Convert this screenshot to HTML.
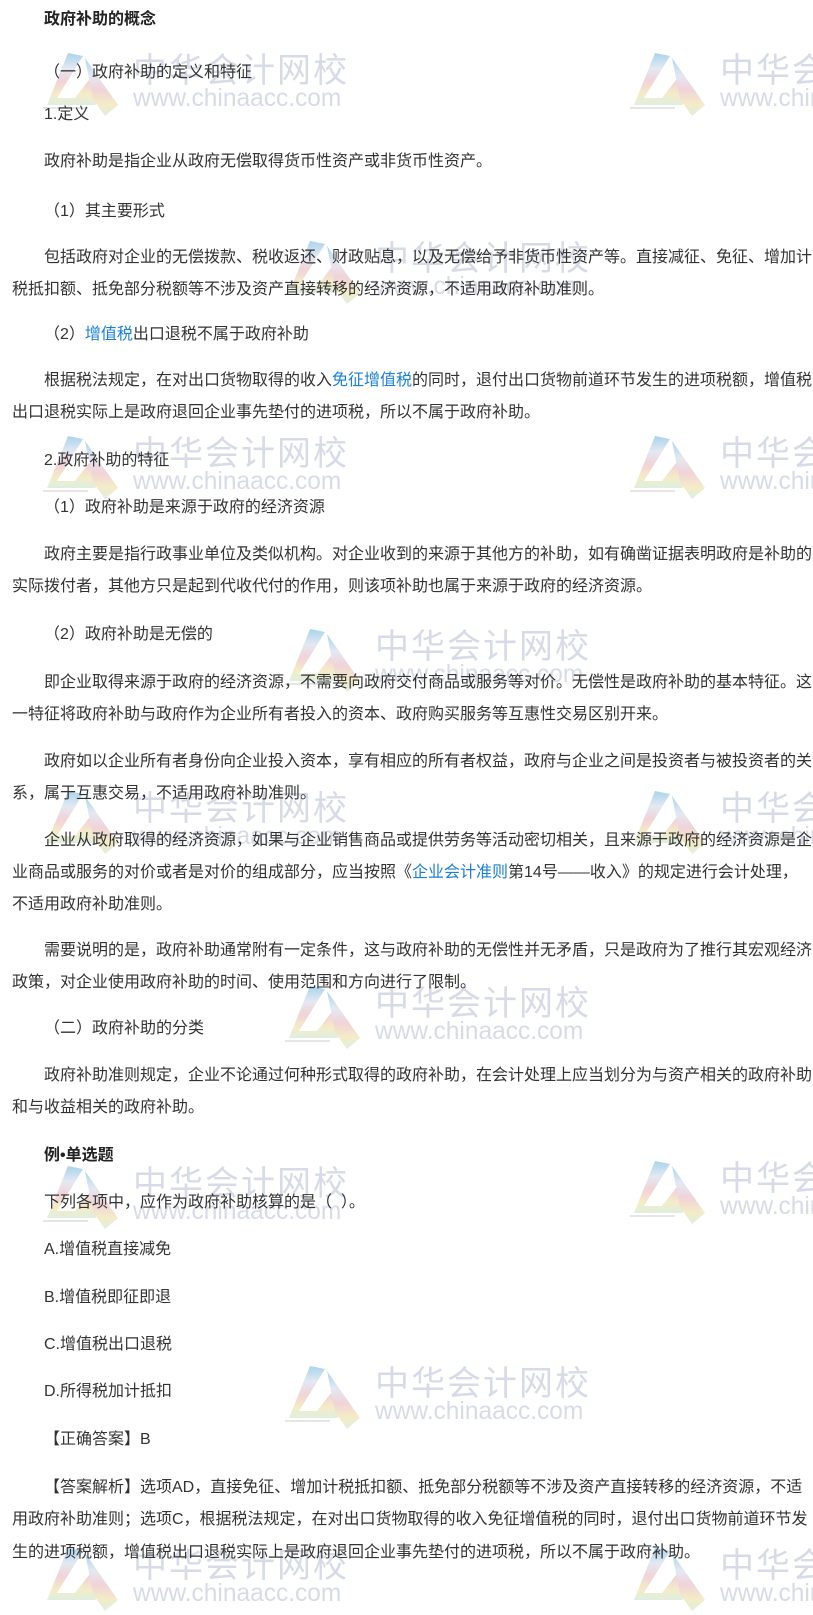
<!DOCTYPE html>
<html><head><meta charset="utf-8">
<style>
html,body{margin:0;padding:0;background:#fff;}
body{width:813px;height:1590px;position:relative;overflow:hidden;font-family:"Liberation Sans","Noto Sans CJK SC",sans-serif;font-size:16px;color:#333;}
.l{position:absolute;left:12px;height:32px;line-height:32px;white-space:nowrap;z-index:2;}
.i{left:44px;}
.b{font-weight:bold;color:#222;}
a{color:#1a7fd6;text-decoration:none;}
.wm{position:absolute;width:300px;height:70px;z-index:1;}
.wm .t{position:absolute;left:90px;top:0;font-size:34px;line-height:36px;color:#d6dbe7;letter-spacing:2px;white-space:nowrap;font-family:"Noto Sans CJK SC",sans-serif;}
.wm .u{position:absolute;left:90px;top:36px;font-size:25px;line-height:24px;color:#d6dbe7;white-space:nowrap;transform:scaleX(0.98);transform-origin:left;font-family:"Liberation Sans",sans-serif;}
.wm svg{position:absolute;left:0;top:0;}
</style></head><body>

<svg width="0" height="0" style="position:absolute"><defs>
<linearGradient id="g" x1="0" y1="0" x2="0" y2="1">
<stop offset="0" stop-color="#a9d4ec"/><stop offset="0.3" stop-color="#e4e8f2"/><stop offset="0.55" stop-color="#f1d3d8"/><stop offset="0.8" stop-color="#f4ecc7"/><stop offset="1" stop-color="#dfeee0"/>
</linearGradient></defs></svg>

<div class="wm" style="left:43px;top:50px"><svg width="90" height="70"><path d="M25 3 L40 6 L14 48 L32 48 L46 30 L60 48 L52 55 L4 55 Z" fill="url(#g)"/><path d="M42 8 L75 55 L62 66 L50 49 Z" fill="url(#g)"/><path d="M0 58 L45 58" stroke="#e6e6e6" stroke-width="2"/></svg><div class="t">中华会计网校</div><div class="u">www.chinaacc.com</div></div>
<div class="wm" style="left:630px;top:50px"><svg width="90" height="70"><path d="M25 3 L40 6 L14 48 L32 48 L46 30 L60 48 L52 55 L4 55 Z" fill="url(#g)"/><path d="M42 8 L75 55 L62 66 L50 49 Z" fill="url(#g)"/><path d="M0 58 L45 58" stroke="#e6e6e6" stroke-width="2"/></svg><div class="t">中华会计网校</div><div class="u">www.chinaacc.com</div></div>
<div class="wm" style="left:285px;top:238px"><svg width="90" height="70"><path d="M25 3 L40 6 L14 48 L32 48 L46 30 L60 48 L52 55 L4 55 Z" fill="url(#g)"/><path d="M42 8 L75 55 L62 66 L50 49 Z" fill="url(#g)"/></svg><div class="t">中华会计网校</div><div class="u">www.chinaacc.com</div></div>
<div class="wm" style="left:43px;top:433px"><svg width="90" height="70"><path d="M25 3 L40 6 L14 48 L32 48 L46 30 L60 48 L52 55 L4 55 Z" fill="url(#g)"/><path d="M42 8 L75 55 L62 66 L50 49 Z" fill="url(#g)"/><path d="M0 58 L45 58" stroke="#e6e6e6" stroke-width="2"/></svg><div class="t">中华会计网校</div><div class="u">www.chinaacc.com</div></div>
<div class="wm" style="left:630px;top:433px"><svg width="90" height="70"><path d="M25 3 L40 6 L14 48 L32 48 L46 30 L60 48 L52 55 L4 55 Z" fill="url(#g)"/><path d="M42 8 L75 55 L62 66 L50 49 Z" fill="url(#g)"/><path d="M0 58 L45 58" stroke="#e6e6e6" stroke-width="2"/></svg><div class="t">中华会计网校</div><div class="u">www.chinaacc.com</div></div>
<div class="wm" style="left:285px;top:626px"><svg width="90" height="70"><path d="M25 3 L40 6 L14 48 L32 48 L46 30 L60 48 L52 55 L4 55 Z" fill="url(#g)"/><path d="M42 8 L75 55 L62 66 L50 49 Z" fill="url(#g)"/><path d="M0 58 L45 58" stroke="#e6e6e6" stroke-width="2"/></svg><div class="t">中华会计网校</div><div class="u">www.chinaacc.com</div></div>
<div class="wm" style="left:43px;top:788px"><svg width="90" height="70"><path d="M25 3 L40 6 L14 48 L32 48 L46 30 L60 48 L52 55 L4 55 Z" fill="url(#g)"/><path d="M42 8 L75 55 L62 66 L50 49 Z" fill="url(#g)"/></svg><div class="t">中华会计网校</div><div class="u">www.chinaacc.com</div></div>
<div class="wm" style="left:630px;top:788px"><svg width="90" height="70"><path d="M25 3 L40 6 L14 48 L32 48 L46 30 L60 48 L52 55 L4 55 Z" fill="url(#g)"/><path d="M42 8 L75 55 L62 66 L50 49 Z" fill="url(#g)"/></svg><div class="t">中华会计网校</div><div class="u">www.chinaacc.com</div></div>
<div class="wm" style="left:285px;top:983px"><svg width="90" height="70"><path d="M25 3 L40 6 L14 48 L32 48 L46 30 L60 48 L52 55 L4 55 Z" fill="url(#g)"/><path d="M42 8 L75 55 L62 66 L50 49 Z" fill="url(#g)"/><path d="M0 58 L45 58" stroke="#e6e6e6" stroke-width="2"/></svg><div class="t">中华会计网校</div><div class="u">www.chinaacc.com</div></div>
<div class="wm" style="left:630px;top:1158px"><svg width="90" height="70"><path d="M25 3 L40 6 L14 48 L32 48 L46 30 L60 48 L52 55 L4 55 Z" fill="url(#g)"/><path d="M42 8 L75 55 L62 66 L50 49 Z" fill="url(#g)"/><path d="M0 58 L45 58" stroke="#e6e6e6" stroke-width="2"/></svg><div class="t">中华会计网校</div><div class="u">www.chinaacc.com</div></div>
<div class="wm" style="left:43px;top:1163px"><svg width="90" height="70"><path d="M25 3 L40 6 L14 48 L32 48 L46 30 L60 48 L52 55 L4 55 Z" fill="url(#g)"/><path d="M42 8 L75 55 L62 66 L50 49 Z" fill="url(#g)"/><path d="M0 58 L45 58" stroke="#e6e6e6" stroke-width="2"/></svg><div class="t">中华会计网校</div><div class="u">www.chinaacc.com</div></div>
<div class="wm" style="left:285px;top:1363px"><svg width="90" height="70"><path d="M25 3 L40 6 L14 48 L32 48 L46 30 L60 48 L52 55 L4 55 Z" fill="url(#g)"/><path d="M42 8 L75 55 L62 66 L50 49 Z" fill="url(#g)"/><path d="M0 58 L45 58" stroke="#e6e6e6" stroke-width="2"/></svg><div class="t">中华会计网校</div><div class="u">www.chinaacc.com</div></div>
<div class="wm" style="left:43px;top:1545px"><svg width="90" height="70"><path d="M25 3 L40 6 L14 48 L32 48 L46 30 L60 48 L52 55 L4 55 Z" fill="url(#g)"/><path d="M42 8 L75 55 L62 66 L50 49 Z" fill="url(#g)"/></svg><div class="t">中华会计网校</div><div class="u">www.chinaacc.com</div></div>
<div class="wm" style="left:630px;top:1545px"><svg width="90" height="70"><path d="M25 3 L40 6 L14 48 L32 48 L46 30 L60 48 L52 55 L4 55 Z" fill="url(#g)"/><path d="M42 8 L75 55 L62 66 L50 49 Z" fill="url(#g)"/></svg><div class="t">中华会计网校</div><div class="u">www.chinaacc.com</div></div>

<div class="l i b" style="top:4px">政府补助的概念</div>
<div class="l i" style="top:57px">（一）政府补助的定义和特征</div>
<div class="l i" style="top:99px">1.定义</div>
<div class="l i" style="top:146px">政府补助是指企业从政府无偿取得货币性资产或非货币性资产。</div>
<div class="l i" style="top:196px">（1）其主要形式</div>
<div class="l i" style="top:242px">包括政府对企业的无偿拨款、税收返还、财政贴息，以及无偿给予非货币性资产等。直接减征、免征、增加计</div>
<div class="l" style="top:274px">税抵扣额、抵免部分税额等不涉及资产直接转移的经济资源，不适用政府补助准则。</div>
<div class="l i" style="top:319px">（2）<a>增值税</a>出口退税不属于政府补助</div>
<div class="l i" style="top:365px">根据税法规定，在对出口货物取得的收入<a>免征增值税</a>的同时，退付出口货物前道环节发生的进项税额，增值税</div>
<div class="l" style="top:397px">出口退税实际上是政府退回企业事先垫付的进项税，所以不属于政府补助。</div>
<div class="l i" style="top:445px">2.政府补助的特征</div>
<div class="l i" style="top:492px">（1）政府补助是来源于政府的经济资源</div>
<div class="l i" style="top:539px">政府主要是指行政事业单位及类似机构。对企业收到的来源于其他方的补助，如有确凿证据表明政府是补助的</div>
<div class="l" style="top:571px">实际拨付者，其他方只是起到代收代付的作用，则该项补助也属于来源于政府的经济资源。</div>
<div class="l i" style="top:619px">（2）政府补助是无偿的</div>
<div class="l i" style="top:667px">即企业取得来源于政府的经济资源，不需要向政府交付商品或服务等对价。无偿性是政府补助的基本特征。这</div>
<div class="l" style="top:699px">一特征将政府补助与政府作为企业所有者投入的资本、政府购买服务等互惠性交易区别开来。</div>
<div class="l i" style="top:746px">政府如以企业所有者身份向企业投入资本，享有相应的所有者权益，政府与企业之间是投资者与被投资者的关</div>
<div class="l" style="top:778px">系，属于互惠交易，不适用政府补助准则。</div>
<div class="l i" style="top:825px">企业从政府取得的经济资源，如果与企业销售商品或提供劳务等活动密切相关，且来源于政府的经济资源是企</div>
<div class="l" style="top:857px">业商品或服务的对价或者是对价的组成部分，应当按照《<a>企业会计准则</a>第14号——收入》的规定进行会计处理，</div>
<div class="l" style="top:889px">不适用政府补助准则。</div>
<div class="l i" style="top:935px">需要说明的是，政府补助通常附有一定条件，这与政府补助的无偿性并无矛盾，只是政府为了推行其宏观经济</div>
<div class="l" style="top:967px">政策，对企业使用政府补助的时间、使用范围和方向进行了限制。</div>
<div class="l i" style="top:1013px">（二）政府补助的分类</div>
<div class="l i" style="top:1060px">政府补助准则规定，企业不论通过何种形式取得的政府补助，在会计处理上应当划分为与资产相关的政府补助</div>
<div class="l" style="top:1092px">和与收益相关的政府补助。</div>
<div class="l i b" style="top:1140px">例•单选题</div>
<div class="l i" style="top:1187px">下列各项中，应作为政府补助核算的是（&nbsp;&nbsp;）。</div>
<div class="l i" style="top:1234px">A.增值税直接减免</div>
<div class="l i" style="top:1282px">B.增值税即征即退</div>
<div class="l i" style="top:1329px">C.增值税出口退税</div>
<div class="l i" style="top:1376px">D.所得税加计抵扣</div>
<div class="l i" style="top:1424px">【正确答案】B</div>
<div class="l i" style="top:1472px">【答案解析】选项AD，直接免征、增加计税抵扣额、抵免部分税额等不涉及资产直接转移的经济资源，不适</div>
<div class="l" style="top:1504px">用政府补助准则；选项C，根据税法规定，在对出口货物取得的收入免征增值税的同时，退付出口货物前道环节发</div>
<div class="l" style="top:1537px">生的进项税额，增值税出口退税实际上是政府退回企业事先垫付的进项税，所以不属于政府补助。</div>

</body></html>
